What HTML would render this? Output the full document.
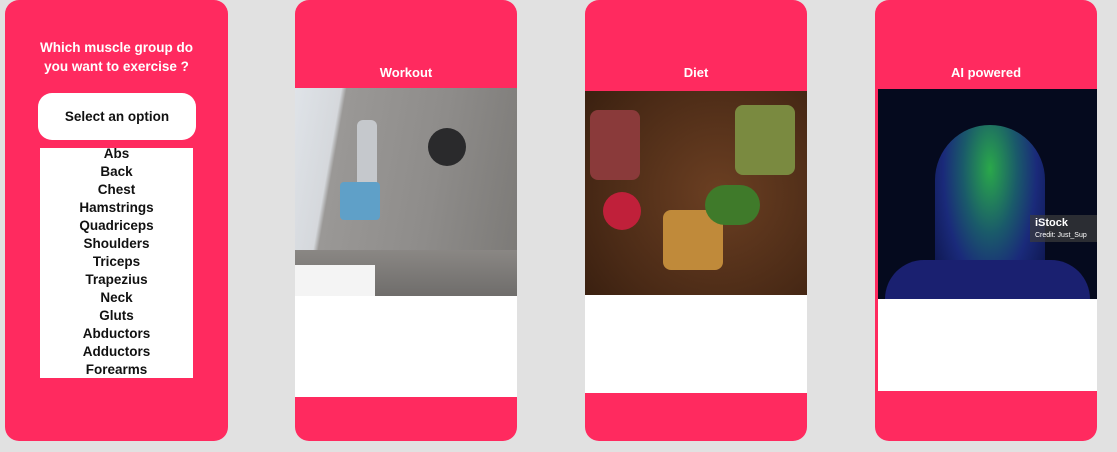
<!DOCTYPE html>
<html><head><style>
body{margin:0;width:1117px;height:452px;background:#e1e1e1;position:relative;overflow:hidden;font-family:"Liberation Sans",sans-serif}
.card{position:absolute;top:0;height:441px;width:222px;background:#ff2a5f;border-radius:0 0 14px 14px}
.card.r{border-radius:14px}
.t{position:absolute;width:100%;text-align:center;color:#fff;font-weight:bold;font-size:13px}
.w{position:absolute;background:#fff}
</style></head><body>
<div class="card r" style="left:5px;width:223px">
 <div class="t" style="top:38px;line-height:19px;font-size:13.5px">Which muscle group do<br>you want to exercise ?</div>
 <div class="w" style="left:33px;top:93px;width:158px;height:47px;border-radius:14px;text-align:center;line-height:47px;font-weight:bold;font-size:13.5px;color:#111">Select an option</div>
 <div class="w" style="left:35px;top:148px;width:153px;height:230px;text-align:center;font-weight:bold;font-size:13.5px;line-height:18px;color:#111">
 <div style="margin-top:-3px">Abs<br>Back<br>Chest<br>Hamstrings<br>Quadriceps<br>Shoulders<br>Triceps<br>Trapezius<br>Neck<br>Gluts<br>Abductors<br>Adductors<br>Forearms</div></div>
</div>
<div class="card r" style="left:295px">
 <div class="t" style="top:65px">Workout</div>
 <div class="w" style="left:0;top:88px;width:222px;height:208px;background:linear-gradient(100deg,#dfe3e8 0,#d5d8dc 18%,#9a9896 20%,#8e8c8a 60%,#7b7976 100%)"></div>
 <div style="position:absolute;left:0;top:250px;width:222px;height:46px;background:linear-gradient(#8a8784,#6f6d6b)"></div>
 <div style="position:absolute;left:0;top:265px;width:80px;height:31px;background:#f4f4f4"></div>
 <div style="position:absolute;left:133px;top:128px;width:38px;height:38px;border-radius:50%;background:#2a2a2c"></div>
 <div style="position:absolute;left:62px;top:120px;width:20px;height:75px;background:#c5c8cc;border-radius:6px"></div>
 <div style="position:absolute;left:45px;top:182px;width:40px;height:38px;background:#5fa0c8;border-radius:4px"></div>
 <div class="w" style="left:0;top:296px;width:222px;height:101px"></div>
</div>
<div class="card r" style="left:585px">
 <div class="t" style="top:65px">Diet</div>
 <div class="w" style="left:0;top:91px;width:222px;height:204px;background:radial-gradient(circle at 60% 50%,#6b3f22,#4a2a16 70%,#3a2010)"></div>
 <div style="position:absolute;left:5px;top:110px;width:50px;height:70px;border-radius:8px;background:#8a3a3a"></div>
 <div style="position:absolute;left:150px;top:105px;width:60px;height:70px;border-radius:8px;background:#7a8a40"></div>
 <div style="position:absolute;left:18px;top:192px;width:38px;height:38px;border-radius:50%;background:#c0203a"></div>
 <div style="position:absolute;left:78px;top:210px;width:60px;height:60px;border-radius:8px;background:#c08a3a"></div>
 <div style="position:absolute;left:120px;top:185px;width:55px;height:40px;border-radius:20px;background:#3f7a2a"></div>
 <div class="w" style="left:0;top:295px;width:222px;height:98px"></div>
</div>
<div class="card r" style="left:875px">
 <div class="t" style="top:65px">AI powered</div>
 <div class="w" style="left:3px;top:89px;width:219px;height:210px;background:#050a1e"></div>
 <div style="position:absolute;left:60px;top:125px;width:110px;height:175px;border-radius:55px 55px 20px 20px;background:radial-gradient(ellipse at 50% 25%,#2aa84a,#1a5a6a 35%,#1a2a7a 60%,#0a1040)"></div>
 <div style="position:absolute;left:10px;top:260px;width:205px;height:39px;border-radius:60px 60px 0 0;background:#1a2070"></div>
 <div style="position:absolute;left:155px;top:215px;width:67px;height:27px;background:rgba(60,60,60,.7);color:#fff;font-size:11px;font-weight:bold;line-height:11px;padding:3px 0 0 5px;box-sizing:border-box">iStock<br><span style="font-size:7px;font-weight:normal">Credit: Just_Sup</span></div>
 <div class="w" style="left:3px;top:299px;width:219px;height:92px"></div>
</div>
</body></html>
